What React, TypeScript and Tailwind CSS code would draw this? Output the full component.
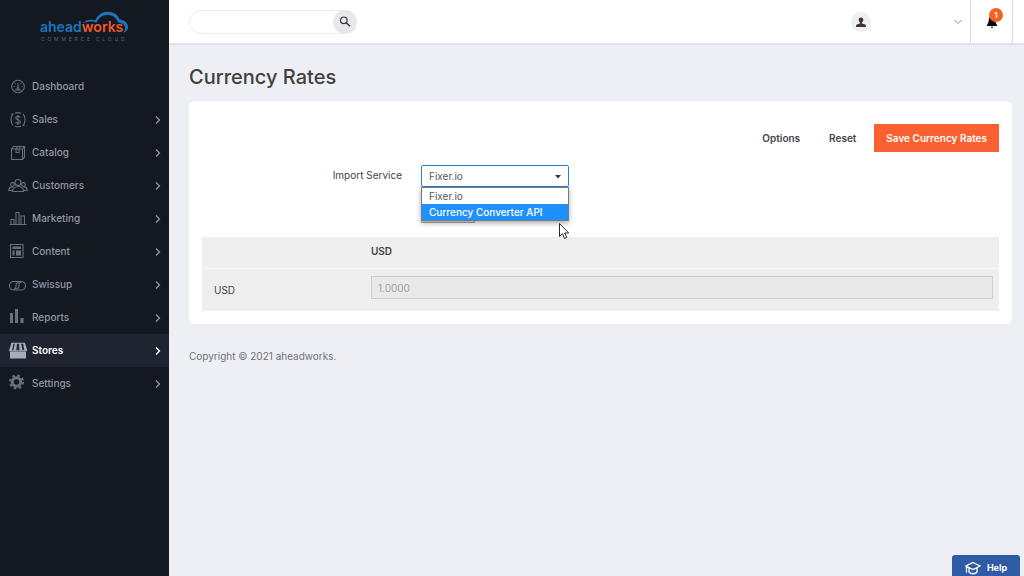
import React, { useState } from "react";

const Svg = ({ children, className = "" }: { children: React.ReactNode; className?: string }) => (
  <svg
    viewBox="0 0 20 20"
    className={`h-5 w-5 ${className}`}
    fill="none"
    stroke="currentColor"
    strokeWidth="1.1"
    aria-hidden="true"
  >
    {children}
  </svg>
);

const menu = [
  {
    name: "Dashboard",
    icon: (
      <Svg>
        <circle cx="10" cy="9.5" r="6.3" />
        <path d="M10 6v5M5.5 9.5h1M13.5 9.5h1M6.8 6.3l.7.7M13.2 6.3l-.7.7M6.5 13h7" />
        <circle cx="10" cy="11.5" r="1" />
      </Svg>
    ),
  },
  {
    name: "Sales",
    icon: (
      <Svg>
        <path d="M5 4C2.3 6.5 2.3 12.500 5 15.500M15 4c2.700 2.500 2.700 8.500 0 11.500M7 3.200C9 2.400 11 2.400 13 3.200M7 16.200c2 .8 4 .8 6 0M3.500 4.500L5.500 3.500M16.500 15L14.500 16" />
        <path d="M12.300 7.500c-.5-1-1.300-1.300-2.300-1.300-1.300 0-2.200.6-2.200 1.700 0 2.500 4.600 1.200 4.600 3.800 0 1.100-1 1.700-2.400 1.700-1.200 0-2-.5-2.400-1.400M10 5v9.700" />
      </Svg>
    ),
  },
  {
    name: "Catalog",
    icon: (
      <Svg>
        <path d="M3.500 6h11v10.500h-11zM3.500 6l2-2.500h11L14.500 6M16.500 3.500v10.500l-2 2.500M8 6v3.500h3V6M8 6l1.500-2.500M11 6l1.500-2.500" />
      </Svg>
    ),
  },
  {
    name: "Customers",
    icon: (
      <Svg>
        <circle cx="10" cy="6.500" r="3" />
        <circle cx="4.500" cy="8.500" r="1.900" />
        <circle cx="15.500" cy="8.500" r="1.900" />
        <path d="M4.500 15.500c0-3 2-5 5.500-5s5.500 2 5.500 5zM4.500 14.500h-3.700c0-2 1.200-3.600 3.700-3.600M15.500 14.500h3.700c0-2-1.200-3.600-3.700-3.600" />
      </Svg>
    ),
  },
  {
    name: "Marketing",
    icon: (
      <Svg>
        <path d="M1.500 15.500h17M3 15.500v-5h3v5M8 15.500V3.500h3v12M13 15.500v-8.500h3.500v8.500" />
      </Svg>
    ),
  },
  {
    name: "Content",
    icon: (
      <Svg>
        <path d="M2.500 2.500h12.500v13h-12.500z" />
        <path d="M4.500 4.500h8.500v2.500h-8.500zM4.500 8.500h2v5h-2zM8 8.500h5v5h-5z" fill="currentColor" stroke="none" />
      </Svg>
    ),
  },
  {
    name: "Swissup",
    icon: (
      <Svg>
        <rect x="1.500" y="6.500" width="16" height="8.500" rx="4.200" />
        <path d="M11.500 8.500c-1.500-2-3.500-.5-3.500 2.200s-1 3.600-2.500 3.600M7.500 13c1.500 2 3.500.5 3.500-2.200s1-3.600 2.500-3.600" />
      </Svg>
    ),
  },
  {
    name: "Reports",
    icon: (
      <Svg>
        <path d="M2 5h3v10H2zM7 1h3v14H7zM12.500 10h3v5h-3z" fill="currentColor" stroke="none" />
      </Svg>
    ),
  },
  {
    name: "Stores",
    icon: (
      <Svg className="text-[#a6adbd]">
        <path
          d="M3.500 2h2L4 9.500H1zM7 2h2l-.7 7.500h-3zM11 2h2l1.500 7.500h-3zM15 2h2l2.300 7.500h-3zM2 10.500h16v7H2z"
          fill="currentColor"
          stroke="none"
        />
        <path d="M3 2.200h14M1 9.800h18" />
      </Svg>
    ),
  },
  {
    name: "Settings",
    icon: (
      <Svg>
        <circle cx="8.500" cy="8" r="4.200" strokeWidth="3" />
        <circle cx="8.500" cy="8" r="6.400" strokeWidth="2.200" strokeDasharray="2.500 2.526" />
      </Svg>
    ),
  },
];

const Chevron = () => (
  <svg viewBox="0 0 8 10" className="h-[10px] w-2" fill="none" stroke="currentColor" strokeWidth="1.3">
    <path d="M2 1.500L5.500 5 2 8.500" />
  </svg>
);

const Logo = () => (
  <a href="#" aria-label="aheadworks" className="block">
    <svg viewBox="0 0 92 32" className="h-8 w-[92px]">
      <path
        d="M44 13.500c3-4 8-4.500 12-3C58.500 5 63 1.500 69 1.700c6 .2 10.500 3.300 11.500 7.800 5 .3 8.500 3.500 8.500 7.500 0 3-1.700 5.200-5 5.700 3.500-3 3.300-9.700-5-10.200-1.500-5-5.500-7.500-10.500-7.500-5.500 0-9 3-11 7.500-4-1.500-8-1.500-13.500 1z"
        fill="#1c75bc"
      />
      <text x="1" y="22" fontFamily="Inter, sans-serif" fontSize="14" fontWeight="600" fill="#1c75bc">
        ahead<tspan fill="#f15a29">works</tspan>
      </text>
      <text x="2" y="31" fontFamily="Inter, sans-serif" fontSize="5" fill="#5b6270">
        C&nbsp; O&nbsp; M&nbsp; M&nbsp; E&nbsp; R&nbsp; C&nbsp; E&nbsp; &nbsp; C&nbsp; L&nbsp; O&nbsp; U&nbsp; D
      </text>
    </svg>
  </a>
);

const Sidebar = () => (
  <aside className="w-[169px] shrink-0 bg-[#141820]">
    <div className="flex h-[70px] pl-[39px] pt-[10px]">
      <Logo />
    </div>
    <nav>
      {menu.map((item) => (
        <a
          key={item.name}
          href="#"
          className={
            item.name == "Stores"
              ? "flex h-[33px] items-center bg-[#1f2430] pl-2 pr-[7px] font-semibold text-white"
              : "flex h-[33px] items-center pl-2 pr-[7px] font-medium text-[#9297a3]"
          }
        >
          <span className="text-[#6a707c]">{item.icon}</span>
          <span className="ml-1 flex-1 text-[10px]">{item.name}</span>
          {item.name != "Dashboard" && <Chevron />}
        </a>
      ))}
    </nav>
  </aside>
);

const Header = () => (
  <header className="flex h-[45px] items-stretch border-b-2 border-[#e2e3e9] bg-white pl-5 pr-[11px]">
    <form className="flex items-center" onSubmit={(e) => e.preventDefault()}>
      <div className="flex h-6 w-[168px] rounded-full border border-[#ececf0]">
        <input type="search" aria-label="Search" className="min-w-0 flex-1 rounded-l-full px-3 text-[10px] outline-none" />
        <button
          type="submit"
          aria-label="Search"
          className="-my-px -mr-px flex h-6 w-6 items-center justify-center rounded-full bg-[#e7e8ec] text-[#41362f]"
        >
          <svg viewBox="0 0 12 12" className="h-3 w-3" fill="none" stroke="currentColor" strokeWidth="1.200">
            <circle cx="4.800" cy="4.300" r="3.300" />
            <path d="M7.200 6.700l3.800 3.500" strokeWidth="1.500" />
          </svg>
        </button>
      </div>
    </form>
    <button type="button" aria-label="Account" className="ml-auto flex w-[112px] items-center justify-between">
      <span className="flex h-5 w-5 items-center justify-center rounded-full bg-[#eeeff5] text-[#41362f]">
        <svg viewBox="0 0 12 12" className="h-3 w-3" fill="currentColor">
          <path d="M6 1.500c1.600 0 2.400 1.100 2.300 2.500-.1 1.100-.6 1.900-1.200 2.300v1.200l3 1c.7.300.9.800.9 2.500H1c0-1.700.2-2.200.9-2.500l3-1V6.300C4.300 5.900 3.800 5.100 3.700 4 3.600 2.600 4.400 1.500 6 1.500z" />
        </svg>
      </span>
      <svg viewBox="0 0 10 6" className="h-[6px] w-[10px] text-[#8e9196]" fill="none" stroke="currentColor">
        <path d="M1.500 1L5 4.500 8.500 1" />
      </svg>
    </button>
    <button
      type="button"
      aria-label="Notifications"
      className="relative ml-[7px] flex w-[43px] items-center justify-center border-x border-[#dcdde3]"
    >
      <svg viewBox="0 0 12 12" className="h-3 w-3" fill="#0b0b0b">
        <path d="M6 0c2 0 3 1.500 3.200 3.500.2 2.500.8 4 1.800 5.500v1H1V9c1-1.500 1.600-3 1.800-5.500C3 1.500 4 0 6 0zM5 10.800h2v1H5z" />
      </svg>
      <span className="absolute right-[9px] top-2 flex h-[14px] w-[14px] items-center justify-center rounded-full bg-[#f26322] text-[8px] font-semibold text-white">
        1
      </span>
    </button>
  </header>
);

const services = ["Fixer.io", "Currency Converter API"];

const ImportService = () => {
  const [service, setService] = useState(services[0]);

  return (
    <div className="mt-[13px] flex items-start">
      <label htmlFor="service" className="w-[200px] pt-[2px] text-right text-[10px] leading-4 text-[#41444b]">
        Import Service
      </label>
      <div className="relative ml-[19px] w-[148px]">
        <select
          id="service"
          value={service}
          onChange={(e) => setService(e.target.value)}
          className="block h-[22px] w-full appearance-none rounded-[2px] border border-[#2482cf] bg-white px-[7px] text-[10px] text-[#54575d] outline-none"
        >
          {services.map((s) => (
            <option key={s}>{s}</option>
          ))}
        </select>
        <svg viewBox="0 0 6 4" className="pointer-events-none absolute right-2 top-[10px] h-1 w-[6px]" fill="#41362f">
          <path d="M0 0h6L3 3.500z" />
        </svg>
        <button
          type="button"
          aria-label="Import"
          className="mt-[10px] block h-[26px] w-[54px] border border-[#adadad] bg-[#e3e3e3]"
        />
        <ul
          role="listbox"
          aria-label="Import Service"
          className="absolute left-0 top-[22px] w-full border border-[#767b82] bg-white text-[10px] leading-4 shadow-[0_2px_5px_rgba(0,0,0,0.35)]"
        >
          <li role="option" aria-selected="false" className="px-[7px] text-[#54575d]">
            {services[0]}
          </li>
          <li role="option" aria-selected="true" className="bg-[#1e90ff] px-[7px] font-medium text-white">
            {services[1]}
          </li>
        </ul>
        <svg viewBox="0 0 12 18" className="absolute left-[137px] top-[57px] h-[18px] w-3" fill="white" stroke="#26263a">
          <path d="M1.500 1.500v13l3-2.800 2 4.800 2.200-1-2-4.500h4z" />
        </svg>
      </div>
    </div>
  );
};

const RatesTable = () => (
  <table className="mt-[14px] w-full border-collapse bg-[#eeeeee] text-left text-[10px] text-[#41444b]">
    <thead>
      <tr className="h-[31px] border-b border-white">
        <th className="w-[169px]"></th>
        <th scope="col" className="pb-[2px] font-semibold">
          USD
        </th>
      </tr>
    </thead>
    <tbody>
      <tr className="h-[43px]">
        <th scope="row" className="pl-3 pt-[2px] font-normal">
          <label htmlFor="rate">USD</label>
        </th>
        <td className="pb-1 pr-[6px]">
          <input
            id="rate"
            type="text"
            defaultValue="1.0000"
            disabled
            className="block h-[23px] w-full border border-[#cfcfcf] bg-[#e9e9e9] px-[6px] text-[10px] text-[#a0a0a0]"
          />
        </td>
      </tr>
    </tbody>
  </table>
);

const App = () => {
  return (
    <div className="flex min-h-screen bg-[#eeeff5] font-['Inter',sans-serif]">
      <Sidebar />
      <div className="min-w-0 flex-1">
        <Header />
        <main className="pl-5 pr-3">
          <h1 className="pt-[18px] text-[20px] font-medium leading-7 text-[#41403c]">Currency Rates</h1>
          <section className="mt-[10px] rounded-md bg-white px-[13px] pb-[13px] pt-[23px]">
            <div className="flex items-center justify-end text-[10px] font-semibold text-[#41444b]">
              <button type="button" className="h-7">
                Options
              </button>
              <button type="button" className="ml-[29px] h-7">
                Reset
              </button>
              <button type="button" className="ml-[18px] h-7 bg-[#fb6130] px-3 text-white">
                Save Currency Rates
              </button>
            </div>
            <ImportService />
            <RatesTable />
          </section>
          <footer className="mt-6 text-[10px] leading-4 text-[#6f7278]">Copyright © 2021 aheadworks.</footer>
        </main>
      </div>
      <button
        type="button"
        className="fixed bottom-0 right-1 flex h-[21px] w-[68px] items-center justify-center gap-[6px] rounded-t-[3px] bg-[#2f5aa6] pt-1 text-[9px] font-bold text-white"
      >
        <svg viewBox="0 0 16 14" className="h-[14px] w-4" fill="none" stroke="currentColor" strokeWidth="1.300">
          <path d="M8 1.500l7 3.500-7 3.500L1 5zM1.500 5.500v6M4 7v4c2 2.300 6 2.300 8 0V7" />
        </svg>
        Help
      </button>
    </div>
  );
};

export default App;
